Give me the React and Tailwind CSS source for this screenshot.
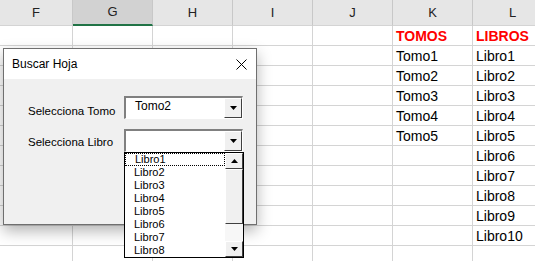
import React from 'react';

const cols = [
    { name: 'F', w: 'w-[73px]' },
    { name: 'G', w: 'w-[80px]' },
    { name: 'H', w: 'w-[80px]' },
    { name: 'I', w: 'w-[80px]' },
    { name: 'J', w: 'w-[80px]' },
    { name: 'K', w: 'w-[80px]' },
    { name: 'L', w: 'w-[80px]' },
];

const tomos = ['Tomo1', 'Tomo2', 'Tomo3', 'Tomo4', 'Tomo5'];
const libros = ['Libro1', 'Libro2', 'Libro3', 'Libro4', 'Libro5', 'Libro6', 'Libro7', 'Libro8', 'Libro9', 'Libro10'];

function Arrow({ down = true }) {
    return (
        <svg width="7" height="4" viewBox="0 0 7 4">
            <path d={down ? 'M0 0h7L3.5 4z' : 'M0 4h7L3.5 0z'} fill="#000" />
        </svg>
    );
}

function Combo({ value }) {
    return (
        <div className="w-[119px] h-[23px] flex border-t-2 border-l-2 border-[#808080] border-b border-r border-b-white border-r-white bg-white">
            <div className="flex-1 pl-[9px] pt-[1px] text-[12px] text-black leading-[14px]">{value}</div>
            <div className="w-[18px] h-[20px] flex items-center justify-center bg-[#f0f0f0] border border-t-white border-l-white border-r-[#404040] border-b-[#404040]">
                <Arrow />
            </div>
        </div>
    );
}

function Cell({ col, children, className = '' }) {
    return (
        <div className={`${col.w} shrink-0 h-[20px] border-r border-b border-[#d4d4d4] pl-[3px] text-[14px] leading-[20px] ${className}`}>
            {children}
        </div>
    );
}

function App() {
    const rows = Array.from({ length: 12 }, (_, i) => i);

    return (
        <div className="relative w-[535px] h-[261px] overflow-hidden bg-white" style={{ fontFamily: '"Liberation Sans", Arial, sans-serif' }}>
            {/* Column headers */}
            <div className="flex h-[26px] bg-[#e6e6e6]">
                {cols.map((c) => (
                    <div
                        key={c.name}
                        className={`${c.w} shrink-0 flex items-center justify-center text-[13px] text-[#222] border-r border-[#c8c8c8] ${c.name === 'G' ? 'bg-[#d2d2d2] border-b-2 border-b-[#217346]' : 'border-b border-b-[#d4d4d4]'}`}
                    >
                        {c.name}
                    </div>
                ))}
            </div>

            {/* Sheet rows */}
            {rows.map((r) => (
                <div key={r} className="flex">
                    {cols.map((c) => {
                        let text = '';
                        let cls = 'text-black';
                        if (c.name === 'K') {
                            if (r === 0) { text = 'TOMOS'; cls = 'text-[#ff0000] font-bold'; }
                            else if (tomos[r - 1]) text = tomos[r - 1];
                        }
                        if (c.name === 'L') {
                            if (r === 0) { text = 'LIBROS'; cls = 'text-[#ff0000] font-bold'; }
                            else if (libros[r - 1]) text = libros[r - 1];
                        }
                        return (
                            <Cell key={c.name} col={c} className={cls}>{text}</Cell>
                        );
                    })}
                </div>
            ))}

            {/* Dialog */}
            <div className="absolute left-[3px] top-[48px] w-[254px] h-[177px] border border-[#6f6f6f] bg-[#f0f0f0] shadow-[0_6px_14px_rgba(0,0,0,0.3)] flex flex-col">
                <div className="h-[30px] bg-white flex items-center justify-between pl-[8px] pr-[9px]">
                    <span className="text-[12px] text-black">Buscar Hoja</span>
                    <svg width="11" height="11" viewBox="0 0 11 11">
                        <path d="M0.5 0.5l10 10M10.5 0.5l-10 10" stroke="#000" strokeWidth="1" />
                    </svg>
                </div>
                <div className="flex flex-col gap-[9px] pt-[16px] pl-[24px]">
                    <div className="flex items-center">
                        <span className="w-[96px] text-[11.5px] text-black pt-[8px]">Selecciona Tomo</span>
                        <Combo value="Tomo2" />
                    </div>
                    <div className="flex items-center">
                        <span className="w-[96px] text-[11.5px] text-black pt-[4px]">Selecciona Libro</span>
                        <Combo value="" />
                    </div>
                </div>
            </div>

            {/* Dropdown list */}
            <div className="absolute left-[124px] top-[152px] w-[120px] h-[106px] border border-black bg-white flex">
                <div className="flex-1 flex flex-col text-[11px] leading-[13px] text-black">
                    {libros.slice(0, 8).map((l, i) => (
                        <div key={l} className={`h-[13px] pl-[9px] ${i === 0 ? 'border border-dotted border-black leading-[11px] pl-[8px]' : ''}`}>
                            {l}
                        </div>
                    ))}
                </div>
                <div className="w-[18px] flex flex-col bg-[#f0f0f0]">
                    <div className="h-[16px] flex items-center justify-center bg-[#f0f0f0] border border-t-white border-l-white border-r-[#404040] border-b-[#404040]">
                        <Arrow down={false} />
                    </div>
                    <div className="h-[55px] bg-[#f0f0f0] border border-t-white border-l-white border-r-[#404040] border-b-[#404040]" />
                    <div className="flex-1 bg-[#f7f7f7]" />
                    <div className="h-[16px] flex items-center justify-center bg-[#f0f0f0] border border-t-white border-l-white border-r-[#404040] border-b-[#404040]">
                        <Arrow />
                    </div>
                </div>
            </div>
        </div>
    );
}

export default App;
